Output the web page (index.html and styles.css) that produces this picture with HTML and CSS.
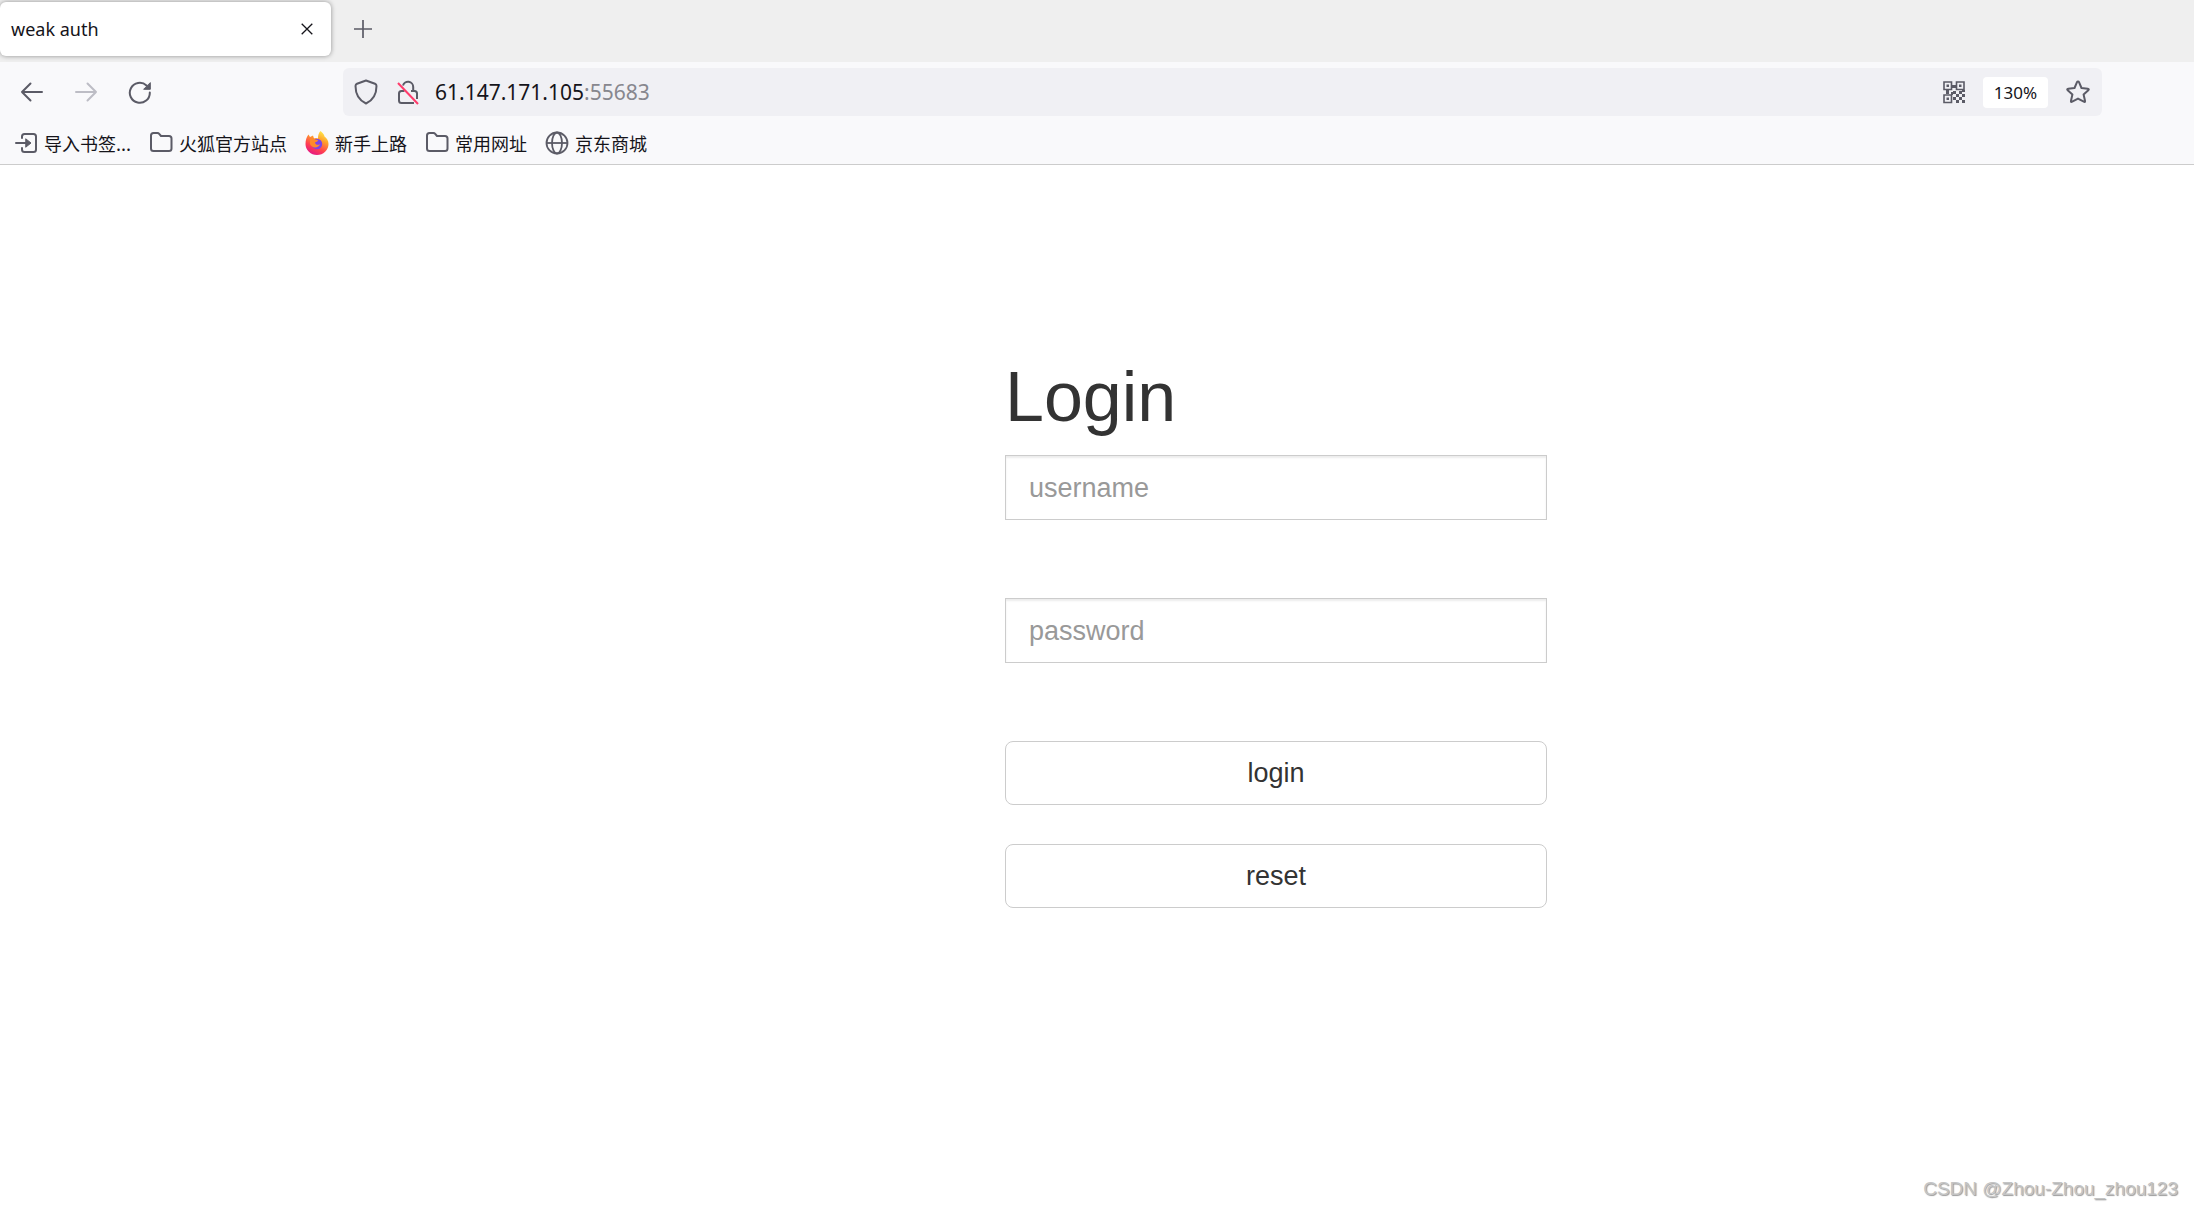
FILE: index.html
```html
<!DOCTYPE html>
<html lang="zh-CN">
<head>
<meta charset="utf-8">
<title>weak auth</title>
<link rel="stylesheet" href="styles.css">
</head>
<body>
<header class="browser">
  <div class="tabstrip">
    <div class="tab">
      <span class="tab-title">weak auth</span>
      <button class="icon-button tab-close" aria-label="Close tab"><svg width="12" height="12" viewBox="0 0 12 12" fill="none" stroke="#15141a" stroke-width="1.300"><path d="M.7.7l10.600 10.600M11.300.7L.7 11.300"/></svg></button>
    </div>
    <button class="icon-button" aria-label="New tab"><svg width="18" height="18" viewBox="0 0 18 18" fill="none" stroke="#5b5b66" stroke-width="1.700"><path d="M9 0v18M0 9h18"/></svg></button>
  </div>
  <div class="navbar">
    <div class="nav-buttons">
      <button class="icon-button" aria-label="Back"><svg width="24" height="24" viewBox="0 0 24 24" fill="none" stroke="#5b5b66" stroke-width="2" stroke-linecap="round" stroke-linejoin="round"><path d="M22 12H2M10.500 3.500L2 12l8.500 8.500"/></svg></button>
      <button class="icon-button" aria-label="Forward" disabled><svg width="24" height="24" viewBox="0 0 24 24" fill="none" stroke="#bdbdc5" stroke-width="2" stroke-linecap="round" stroke-linejoin="round"><path d="M2 12h20M13.500 3.500L22 12l-8.500 8.500"/></svg></button>
      <button class="icon-button" aria-label="Reload"><svg width="24" height="24" viewBox="0 0 24 24" fill="none" stroke="#5b5b66" stroke-width="2" stroke-linecap="round"><path d="M21.800 12.500A10 10 0 1 1 18.500 5.400"/><path d="M22.300 3v6.300h-6.300z" fill="#5b5b66" stroke-width="1" stroke-linejoin="round"/></svg></button>
    </div>
    <div class="urlbar">
      <button class="icon-button" aria-label="Tracking protection"><svg width="24" height="26" viewBox="0 0 24 26" fill="none" stroke="#5b5b66" stroke-width="2" stroke-linejoin="round"><path d="M12 1.500l9 3.300q1.500.6 1.500 2.200C22.500 15 18.500 21.500 12 24.500 5.500 21.500 1.500 15 1.500 7q0-1.600 1.500-2.200z"/></svg></button>
      <button class="icon-button" aria-label="Connection not secure"><svg width="24" height="26" viewBox="0 0 24 26" fill="none" stroke="#5b5b66" stroke-width="2"><path d="M7 6.500a5.200 5.200 0 0 1 10.200 1.500v4M15 12h3.500q2.500 0 2.500 2.500v5.500M8.500 12H5.500Q3 12 3 14.500v7Q3 24 5.500 24H18"/><path d="M2 4l20 21" stroke="#ff3b6b"/></svg></button>
      <a class="address" href="#"><span class="host">61.147.171.105</span>:55683</a>
      <button class="icon-button" aria-label="QR code"><svg width="22" height="23" viewBox="0 0 22 23" fill="none" stroke="#5b5b66" stroke-width="1.600"><path d="M1 1h7.500v7.500H1zM13.500 1H21v7.500h-7.500zM1 14h7.500v7.500H1z"/><path fill="#5b5b66" stroke="none" d="M3.500 3.500h2.500v2.500H3.500zM16 3.500h2.500v2.500H16zM3.500 16.500h2.500V19H3.500zM9 4h4v3H9zM3 9h3v4H3zM10 10h3v3h-3zM13 13h3v3h-3zM16 10h3v3h-3zM19 13h3v3h-3zM10 16h3v3h-3zM16 16h3v3h-3zM13 19h3v3h-3zM19 19h3v3h-3zM8 11h2v3H8zM19 9h3v2h-3z"/></svg></button>
      <button class="zoom">130%</button>
      <button class="icon-button" aria-label="Bookmark this page"><svg width="24" height="24" viewBox="0 0 24 24" fill="none" stroke="#5b5b66" stroke-width="2" stroke-linejoin="round"><path d="M12 1.500q.7 0 1 .7l2.500 5.800 6.300.7q1.700.3.500 1.500l-4.700 4.300 1.400 6.300q.3 1.700-1.200.9L12 18.600l-5.800 3.100q-1.500.8-1.200-.9l1.400-6.300-4.700-4.300q-1.200-1.200.5-1.500l6.300-.7L11 2.200q.3-.7 1-.7z"/></svg></button>
    </div>
  </div>
  <nav class="bookmarks">
    <a href="#"><svg width="24" height="24" viewBox="0 0 24 24" fill="none" stroke="#5b5b66" stroke-width="2" stroke-linecap="round"><path d="M8 7V5.500Q8 3 10.500 3h9Q22 3 22 5.500v13q0 2.500-2.500 2.500h-9Q8 21 8 18.500V17M2 12h13"/><path d="M12 8l5 4-5 4z" fill="#5b5b66" stroke-width="1"/></svg>导入书签...</a>
    <a href="#"><svg width="24" height="24" viewBox="0 0 24 24" fill="none" stroke="#5b5b66" stroke-width="2" stroke-linejoin="round"><path d="M2 17.500v-13Q2 2 4.500 2h4q1 0 1.700.8L12 5h8q2.500 0 2.500 2.500v10q0 2.500-2.500 2.500H4.500Q2 20 2 17.500z"/></svg>火狐官方站点</a>
    <a href="#"><svg width="24" height="24" viewBox="0 0 24 24"><defs><linearGradient id="flame" x1=".8" y1="0" x2=".3" y2="1"><stop offset="0" stop-color="#fff44f"/><stop offset=".35" stop-color="#ffa02b"/><stop offset=".7" stop-color="#ff4050"/><stop offset="1" stop-color="#e31587"/></linearGradient></defs><path fill="url(#flame)" d="M15.500 0c2.500 2 3.500 3.500 4 5.500 2.500 1.500 4 4.500 4 7.500a11.500 11 0 0 1-23 0C.5 9 1.500 6 3.500 3.500L5 6l3-1.500 1 3c1.500-1 3-.5 4 0 0-3 .5-5.500 2.500-7.500z"/><circle cx="12" cy="13" r="5.200" fill="#7b45e8"/><path fill="#ff8a2a" d="M5 8c2-1.500 4-1 5 .5l3 .5c0 1.500-2 2-3 2.500.5 2.500 3 3 5 1.500-1 4-8 5-10 0z"/></svg>新手上路</a>
    <a href="#"><svg width="24" height="24" viewBox="0 0 24 24" fill="none" stroke="#5b5b66" stroke-width="2" stroke-linejoin="round"><path d="M2 17.500v-13Q2 2 4.500 2h4q1 0 1.700.8L12 5h8q2.500 0 2.500 2.500v10q0 2.500-2.500 2.500H4.500Q2 20 2 17.500z"/></svg>常用网址</a>
    <a href="#"><svg width="24" height="24" viewBox="0 0 24 24" fill="none" stroke="#5b5b66" stroke-width="1.800"><circle cx="12" cy="12" r="10.500"/><ellipse cx="12" cy="12" rx="5" ry="10.500"/><path d="M1.500 12h21"/></svg>京东商城</a>
  </nav>
</header>
<main class="page">
  <form class="login">
    <h1>Login</h1>
    <input class="field" type="text" placeholder="username" aria-label="username">
    <input class="field" type="password" placeholder="password" aria-label="password">
    <div class="actions">
      <button class="action" type="button">login</button>
      <button class="action" type="reset">reset</button>
    </div>
  </form>
</main>
<footer class="watermark">CSDN @Zhou-Zhou_zhou123</footer>
</body>
</html>
```
FILE: styles.css
```css
* { box-sizing: border-box; }

body {
  display: flex;
  flex-direction: column;
  min-height: 100vh;
  margin: 0;
  background: #fff;
  font-family: "Liberation Sans", Arial, sans-serif;
}

svg { display: block; flex: none; }

button { font: inherit; }

.browser {
  border-bottom: 1px solid #ccc;
  background: #f9f9fb;
  color: #15141a;
  font-family: "Noto Sans", "Noto Sans CJK SC", sans-serif;
}

.icon-button {
  flex: none;
  padding: 0;
  border: 0;
  background: none;
}

.tabstrip {
  display: flex;
  align-items: center;
  gap: 23px;
  height: 62px;
  padding-bottom: 4px;
  background: #efefef;
}

.tab {
  display: flex;
  align-items: center;
  justify-content: space-between;
  width: 331px;
  height: 54px;
  padding: 0 18px 0 11px;
  border-radius: 6px;
  background: #fff;
  box-shadow: 0 0 5px rgba(0, 0, 0, 0.4);
  font-size: 18px;
}

.navbar {
  display: flex;
  align-items: center;
  height: 60px;
  padding-right: 92px;
}

.nav-buttons {
  display: flex;
  gap: 30px;
  width: 343px;
  padding-left: 20px;
}

.urlbar {
  display: flex;
  flex: 1;
  align-items: center;
  gap: 18px;
  height: 48px;
  padding: 0 12px 0 11px;
  border-radius: 6px;
  background: #f0f0f4;
}

.address {
  flex: 1;
  margin-left: -3px;
  color: #87878e;
  font-size: 21px;
  text-decoration: none;
}

.host { color: #15141a; }

.zoom {
  width: 65px;
  height: 31px;
  padding: 0;
  border: 0;
  border-radius: 4px;
  background: #fff;
  color: #15141a;
  font-size: 17px;
}

.bookmarks {
  display: flex;
  align-items: center;
  gap: 18px;
  height: 42px;
  padding-left: 14px;
}

.bookmarks a {
  display: flex;
  align-items: center;
  gap: 6px;
  color: #15141a;
  font-family: "Noto Sans CJK SC", sans-serif;
  font-size: 18px;
  line-height: 24px;
  text-decoration: none;
}

.page {
  display: grid;
  flex: 1;
  grid-template-columns: 1005fr 542fr 647fr;
  align-items: start;
  padding: 192px 0 32px;
}

.login {
  display: grid;
  grid-column: 2;
  gap: 78px;
}

.login h1 {
  margin: 0 0 -60px;
  color: #333;
  font-size: 70px;
  font-weight: 400;
  line-height: 80px;
}

.field {
  width: 100%;
  height: 65px;
  padding: 2px 23px 0;
  border: 1px solid #ccc;
  border-radius: 0;
  box-shadow: inset 0 2px 2px rgba(0, 0, 0, 0.075);
  font-family: inherit;
  font-size: 27px;
}

.field::placeholder { color: #999; }

.actions {
  display: grid;
  gap: 39px;
}

.action {
  height: 64px;
  border: 1px solid #ccc;
  border-radius: 8px;
  background: #fff;
  color: #333;
  font-size: 27px;
}

.watermark {
  padding: 0 16px 7px;
  color: #c4c4c4;
  font-size: 19px;
  line-height: 24px;
  text-align: right;
  text-shadow: 1px 1px 1px #999;
}
```
